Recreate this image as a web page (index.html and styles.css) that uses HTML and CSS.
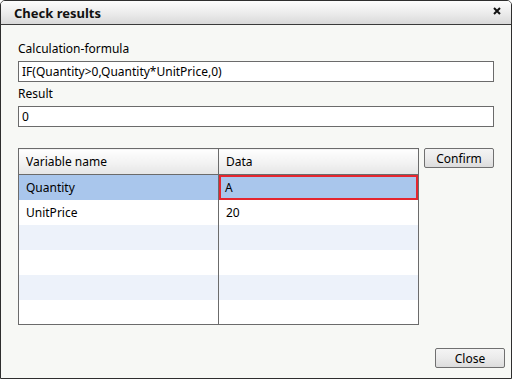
FILE: index.html
```html
<!DOCTYPE html>
<html>
<head>
    <link rel="stylesheet" href="styles.css">
</head>
<body>
<div class="dialog">
    <div class="title-bar">
        <span class="title">Check results</span>
        <svg class="close-x" viewBox="0 0 8 8">
            <path d="M1 1L7 7M7 1L1 7"/>
        </svg>
    </div>
    <div class="content">
        <label class="field-label">Calculation-formula</label>
        <div class="text-box">IF(Quantity&gt;0,Quantity*UnitPrice,0)</div>
        <label class="field-label result-label">Result</label>
        <div class="text-box">0</div>

        <div class="grid-row">
            <table class="var-table">
                <thead>
                    <tr><th class="col-name">Variable name</th><th>Data</th></tr>
                </thead>
                <tbody>
                    <tr class="selected"><td>Quantity</td><td class="editing">A</td></tr>
                    <tr><td>UnitPrice</td><td>20</td></tr>
                    <tr class="alt"><td></td><td></td></tr>
                    <tr><td></td><td></td></tr>
                    <tr class="alt"><td></td><td></td></tr>
                    <tr><td></td><td></td></tr>
                </tbody>
            </table>
            <button class="btn">Confirm</button>
        </div>

        <div class="footer">
            <button class="btn close-btn">Close</button>
        </div>
    </div>
</div>
</body>
</html>
```

FILE: styles.css
```css
* {
    margin: 0;
    padding: 0;
    box-sizing: border-box;
}

body {
    font-family: 'Noto Sans', 'Liberation Sans', sans-serif;
    font-size: 12px;
    color: #000;
    background: #fff;
}

.dialog {
    width: 512px;
    height: 379px;
    border: 1px solid #2e2e2e;
    border-radius: 5px 5px 0 0;
    background: #f7f8f5;
    display: flex;
    flex-direction: column;
    overflow: hidden;
}

.title-bar {
    height: 24px;
    border-bottom: 1px solid #3a3a3a;
    background: linear-gradient(#fdfdfd, #e9e9e9 60%, #d9d9d9);
    display: flex;
    align-items: center;
    justify-content: space-between;
    padding: 0 10px 0 13px;
    flex-shrink: 0;
}

.title {
    font-weight: bold;
    font-size: 13px;
    color: #111;
}

.close-x {
    width: 8px;
    height: 8px;
    margin-top: -4px;
    stroke: #111;
    stroke-width: 2;
    fill: none;
}

.content {
    flex: 1;
    display: flex;
    flex-direction: column;
    padding: 16px 17px 10px 17px;
}

.field-label {
    display: block;
    line-height: 16px;
    height: 16px;
    margin-bottom: 4px;
}

.result-label {
    margin-top: 4px;
    margin-bottom: 4px;
}

.text-box {
    width: 476px;
    height: 21px;
    line-height: 19px;
    border: 1px solid #6b6b6b;
    background: #fff;
    padding-left: 3px;
}

.grid-row {
    display: flex;
    align-items: flex-start;
    gap: 5px;
    margin-top: 21px;
}

.var-table {
    width: 401px;
    border-collapse: collapse;
    border: 1px solid #6b6b6b;
    background: #fff;
    table-layout: fixed;
}

.var-table th {
    height: 26px;
    font-weight: normal;
    text-align: left;
    padding-left: 7px;
    background: linear-gradient(#ffffff, #f3f3f3 50%, #e6e6e6);
    border-bottom: 1px solid #6b6b6b;
}

.var-table th.col-name {
    width: 200px;
    border-right: 1px solid #6b6b6b;
}

.var-table td {
    height: 25px;
    padding: 0 0 0 7px;
}

.var-table td:first-child {
    border-right: 1px solid #6b6b6b;
}

.var-table tr.selected td {
    background: #a9c6ec;
}

.var-table tr.alt td {
    background: #edf2fa;
}

.var-table td.editing {
    box-shadow: inset 0 0 0 2px #e4262f;
    padding-left: 6px;
}

.btn {
    font-family: inherit;
    font-size: 12px;
    width: 70px;
    height: 20px;
    border: 1px solid #707070;
    border-radius: 2px;
    background: linear-gradient(#f4f4f4, #ebebeb 50%, #dcdcdc);
    color: #000;
}

.footer {
    margin-top: auto;
    display: flex;
    justify-content: flex-end;
    margin-right: -11px;
}
```
